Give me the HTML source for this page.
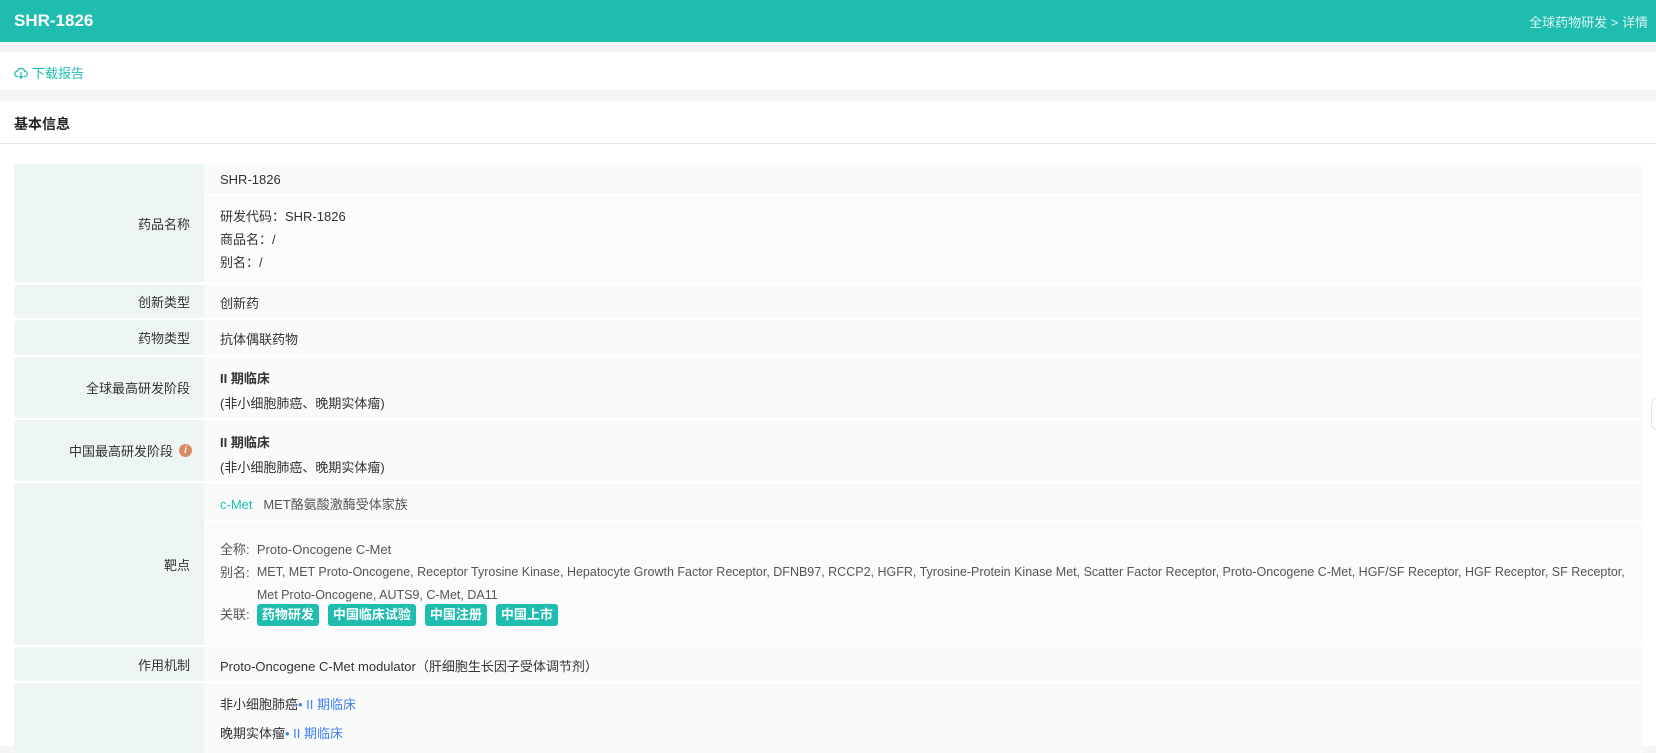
<!DOCTYPE html>
<html><head><meta charset="utf-8">
<style>
*{margin:0;padding:0;box-sizing:border-box}
body{width:1656px;height:746px;overflow:hidden;background:#f5f5f8;font-family:"Liberation Sans","Noto Sans CJK SC",sans-serif;font-size:13px;color:#333;position:relative}
.hdr{position:absolute;left:0;top:0;width:1656px;height:42px;background:#1fbdb0;color:#fff}
.hdr .t{position:absolute;left:14px;top:11px;font-size:17px;font-weight:bold}
.hdr .r{position:absolute;right:8px;top:13px;font-size:13px;color:#d8f5f1}
.card1{position:absolute;left:0;top:52px;width:1656px;height:38px;background:#fff}
.dl{position:absolute;left:14px;top:11px;color:#1fbdb0;font-size:13px;display:flex;align-items:center;gap:4px}
.card2{position:absolute;left:0;top:101px;width:1656px;height:645px;background:#fff}
.ttl{position:absolute;left:14px;top:114px;font-weight:bold;font-size:14px;color:#222}
.line{position:absolute;left:0;top:143px;width:1656px;height:1px;background:#e6e6e6}
.row{position:absolute;left:14px;width:1628px}
.lab{position:absolute;left:0;top:0;bottom:0;width:190px;background:#eef6f5;border-radius:4px 0 0 4px;display:flex;align-items:center;justify-content:flex-end;padding-right:14px;color:#333}
.val{position:absolute;left:190px;right:0;top:0;bottom:0;background:#f9fbfb}
.txt{position:absolute;left:16px;white-space:nowrap}
.b{font-weight:bold}
.g{color:#555}
.tag{display:inline-block;background:#1fbdb0;color:#fff;font-weight:bold;border-radius:3px;padding:0 5px;height:22px;line-height:22px;margin-right:9px}
.blue{color:#3f7fef}
</style></head><body>
<div class="hdr"><div class="t">SHR-1826</div><div class="r" style="top:12px">全球药物研发 &gt; 详情</div></div>
<div class="card1"><div class="dl"><svg width="14" height="14" viewBox="0 0 16 16" fill="none" stroke="#1fbdb0" stroke-width="1.5"><path d="M4.5 12H4a3 3 0 0 1-.3-6A4.5 4.5 0 0 1 12.3 6 3 3 0 0 1 12 12h-.5"/><path d="M8 7v7M5.5 11.5 8 14l2.5-2.5"/></svg>下载报告</div></div>
<div class="card2"></div>
<div class="ttl">基本信息</div>
<div class="line"></div>

<div class="row" style="top:164px;height:118px"><div class="lab">药品名称</div>
<div class="val" style="bottom:88px"></div>
<div class="val" style="top:32px;background:#fafcfc"></div>
<div class="txt" style="left:206px;top:8px">SHR-1826</div>
<div class="txt" style="left:206px;top:41px;line-height:23px">研发代码：SHR-1826<br>商品名：/<br>别名：/</div></div>

<div class="row" style="top:285px;height:33px"><div class="lab">创新类型</div><div class="val"></div><div class="txt" style="left:206px;top:8px">创新药</div></div>
<div class="row" style="top:320px;height:35px"><div class="lab">药物类型</div><div class="val"></div><div class="txt" style="left:206px;top:9px">抗体偶联药物</div></div>
<div class="row" style="top:357px;height:61px"><div class="lab">全球最高研发阶段</div><div class="val"></div><div class="txt" style="left:206px;top:9px;line-height:25px"><span class="b">II 期临床</span><br>(非小细胞肺癌、晚期实体瘤)</div></div>
<div class="row" style="top:420px;height:61px"><div class="lab">中国最高研发阶段<span style="display:inline-block;width:13px;height:13px;border-radius:50%;background:#d98a62;color:#fff;font-size:10px;font-style:italic;font-weight:bold;text-align:center;line-height:13px;margin-left:6px;margin-right:-2px">i</span></div><div class="val"></div><div class="txt" style="left:206px;top:10px;line-height:25px"><span class="b">II 期临床</span><br>(非小细胞肺癌、晚期实体瘤)</div></div>

<div class="row" style="top:483px;height:162px"><div class="lab">靶点</div>
<div class="val" style="bottom:125px"></div>
<div class="val" style="top:39px;background:#fafcfc"></div>
<div class="txt" style="left:206px;top:11px"><span style="color:#1fbdb0">c-Met</span>&nbsp;&nbsp;&nbsp;<span class="g">MET酪氨酸激酶受体家族</span></div>
<div class="txt g" style="left:206px;top:56px">全称:&nbsp;&nbsp;Proto-Oncogene C-Met</div>
<div class="g" style="position:absolute;left:206px;top:78px;line-height:23px;display:flex;white-space:nowrap"><span style="flex:none">别名:&nbsp;&nbsp;</span><span style="font-size:12.5px">MET, MET Proto-Oncogene, Receptor Tyrosine Kinase, Hepatocyte Growth Factor Receptor, DFNB97, RCCP2, HGFR, Tyrosine-Protein Kinase Met, Scatter Factor Receptor, Proto-Oncogene C-Met, HGF/SF Receptor, HGF Receptor, SF Receptor,<br>Met Proto-Oncogene, AUTS9, C-Met, DA11</span></div>
<div class="txt g" style="left:206px;top:121px">关联:&nbsp;&nbsp;<span class="tag">药物研发</span><span class="tag">中国临床试验</span><span class="tag">中国注册</span><span class="tag">中国上市</span></div>
</div>

<div class="row" style="top:647px;height:34px"><div class="lab">作用机制</div><div class="val"></div><div class="txt" style="left:206px;top:9px">Proto-Oncogene C-Met modulator（肝细胞生长因子受体调节剂）</div></div>
<div class="row" style="top:683px;height:70px"><div class="lab"></div><div class="val"></div>
<div class="txt" style="left:206px;top:11px">非小细胞肺癌<span class="blue">• II 期临床</span></div>
<div class="txt" style="left:206px;top:40px">晚期实体瘤<span class="blue">• II 期临床</span></div></div>

<div style="position:absolute;left:1651px;top:398px;width:12px;height:32px;background:#fff;border:1px solid #e2e2e2;border-radius:6px"></div>
</body></html>
